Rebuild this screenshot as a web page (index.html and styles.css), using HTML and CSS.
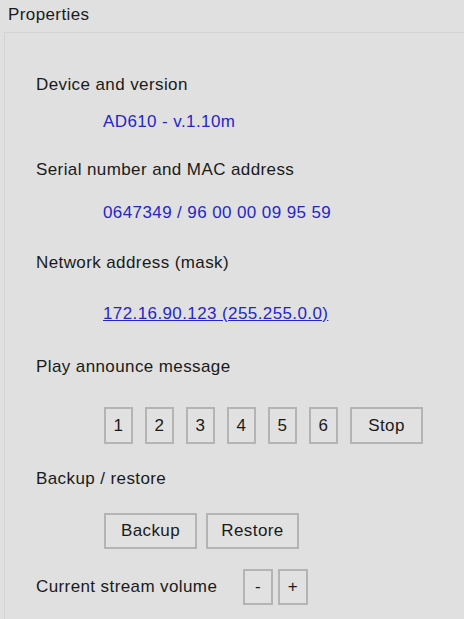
FILE: index.html
```html
<!DOCTYPE html>
<html lang="en">
<head>
    <meta charset="UTF-8" />
    <title>Properties</title>
    <link rel="stylesheet" href="styles.css">
</head>
<body>
    <div class="title">Properties</div>
    <div class="group">
        <div class="label first">Device and version</div>
        <div class="value v1">AD610 - v.1.10m</div>

        <div class="label l2">Serial number and MAC address</div>
        <div class="value v2">0647349 / 96 00 00 09 95 59</div>

        <div class="label l3">Network address (mask)</div>
        <div class="value v3"><a href="#">172.16.90.123 (255.255.0.0)</a></div>

        <div class="label l4">Play announce message</div>
        <div class="buttons play">
            <button class="btn num">1</button>
            <button class="btn num">2</button>
            <button class="btn num">3</button>
            <button class="btn num">4</button>
            <button class="btn num">5</button>
            <button class="btn num">6</button>
            <button class="btn stop">Stop</button>
        </div>

        <div class="label l5">Backup / restore</div>
        <div class="buttons backup">
            <button class="btn wide">Backup</button>
            <button class="btn wide">Restore</button>
        </div>

        <div class="volume">
            <span class="label">Current stream volume</span>
            <button class="btn small">-</button>
            <button class="btn small">+</button>
        </div>
    </div>
</body>
</html>
```

FILE: styles.css
```css
body { margin: 0; background: #e0e0e0; font-family: "Liberation Sans", Arial, sans-serif; font-size: 17px; letter-spacing: 0.4px; color: #1a1a1a; overflow: hidden; }
.title { height: 32px; padding: 5px 0 0 8px; box-sizing: border-box; line-height: 20px; }
.group { margin-left: 4px; border-top: 1px solid #d4d4d4; border-left: 1px solid #d4d4d4; padding: 42px 0 0 31px; height: 560px; }
.label { line-height: 20px; }
.value { line-height: 20px; margin-left: 67px; color: #2626c8; }
.value a { color: #2626c8; }
.v1 { margin-top: 17px; }
.l2 { margin-top: 28px; }
.v2 { margin-top: 23px; }
.l3 { margin-top: 30px; }
.v3 { margin-top: 31px; }
.l4 { margin-top: 33px; }
.buttons { display: flex; margin: 30px 0 0 68px; }
.l5 { margin-top: 25px; }
.backup { margin-top: 24px; }
.btn { font-family: inherit; font-size: 17px; letter-spacing: 0.4px; color: #1a1a1a; background: #e1e1e1; border: 2px solid #b4b4b4; padding: 0; margin: 0; }
.num { width: 29px; height: 37px; margin-right: 12px; }
.stop { width: 73px; height: 37px; }
.wide { width: 93px; height: 36px; margin-right: 9px; }
.volume { display: flex; align-items: center; margin-top: 20px; }
.volume .label { width: 207px; }
.small { width: 30px; height: 36px; margin-right: 5px; }
```
